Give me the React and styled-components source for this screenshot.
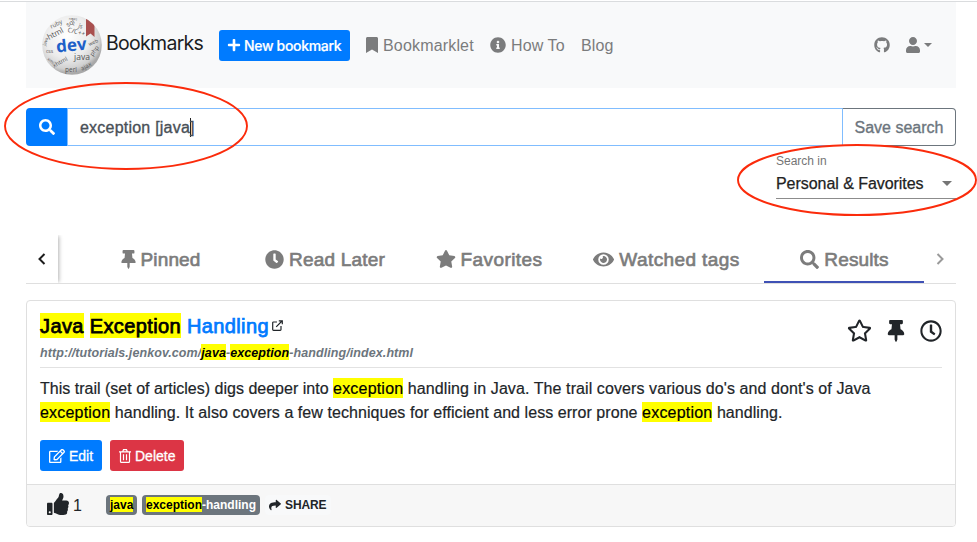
import React from "react";
import styled, { createGlobalStyle } from "styled-components";
import {
  FaPlus, FaBookmark, FaInfoCircle, FaGithub, FaUser, FaSearch, FaThumbtack, FaClock,
  FaStar, FaEye, FaRegStar, FaRegClock, FaRegEdit, FaThumbsUp, FaShare,
} from "react-icons/fa";

const GlobalStyle = createGlobalStyle`
  * { box-sizing: border-box; }
  body { margin: 0; background: #fff; color: #212529; overflow: hidden;
    font: 16px/24px "Liberation Sans", Arial, sans-serif; }
  button { font-family: inherit; cursor: pointer; }
  svg { display: block; flex: none; }
`;

const Page = styled.div`
  position: relative;
  width: 977px;
  height: 542px;
  padding: 1px 21px 0 26px;
  &::before { content: ""; display: block; height: 1px; margin: 0 -21px 0 -26px; background: #dadcde; }
`;
const Text = styled.span`
  white-space: nowrap;
  letter-spacing: ${(p) => p.$ls || 0}px;
  -webkit-text-stroke: ${(p) => p.$stroke || 0}px currentColor;
`;
const Glyph = styled.span`
  display: flex;
  justify-content: center;
  width: ${(p) => p.$w}px;
`;
const Header = styled.header`
  display: flex;
  align-items: center;
  height: 86px;
  padding: 0 24px 0 16px;
  background: #f8f9fa;
`;
const Brand = styled.a`
  display: flex;
  width: 177px;
  gap: 4px;
  font: 19.5px/30px Inter, sans-serif;
  color: #1b1d1f;
  align-items: center;
  & > span { margin-top: -5px; }
`;
const NewButton = styled.button`
  display: flex;
  align-items: center;
  gap: 3px;
  width: 131px;
  height: 31px;
  padding: 0 8px;
  border: 0;
  border-radius: 3px;
  background: #007bff;
  color: #fff;
  font: 500 14px/21px Inter, sans-serif;
`;
const Nav = styled.nav`
  display: flex;
  flex: 1;
  margin-left: 16px;
`;
const NavLink = styled.a`
  display: flex;
  align-items: center;
  gap: ${(p) => p.$gap || 0}px;
  width: ${(p) => p.$w}px;
  color: #7b7c7d;
  & > ${Text} { padding-top: 2px; }
`;
const Caret = styled.i`
  border: solid transparent;
  border-width: ${(p) => p.$s}px ${(p) => p.$s}px 0;
  border-top-color: currentColor;
`;
const SearchRow = styled.div`
  display: flex;
  width: 930px;
  height: 38px;
  margin-top: 20px;
`;
const SearchButton = styled.button`
  display: grid;
  place-items: center;
  width: 41px;
  border: 0;
  border-radius: 4px 0 0 4px;
  background: #007bff;
  color: #fff;
`;
const SearchField = styled.div`
  display: flex;
  align-items: center;
  flex: 1;
  padding: 1px 0 0 12px;
  border: 1px solid #80bdff;
  color: #495057;
`;
const Cursor = styled.i`
  width: 1px;
  height: 19px;
  margin-right: -1px;
  background: #222;
`;
const SaveButton = styled.button`
  width: 114px;
  margin-left: -1px;
  border: 1px solid #6c757d;
  border-left-color: #80bdff;
  border-radius: 0 4px 4px 0;
  background: #fff;
  color: #6c757d;
  font-size: 16px;
  padding: 2px 0 0;
`;
const Scope = styled.div`
  width: 180px;
  height: 53px;
  margin-left: 750px;
  padding-top: 7px;
  border-bottom: 1px solid #8c8c8c;
  color: #222;
`;
const ScopeLabel = styled.div`
  font-size: 12px;
  line-height: 16px;
  color: #757575;
`;
const ScopeValue = styled.div`
  display: flex;
  align-items: center;
  justify-content: space-between;
  height: 28px;
  padding-right: 4px;
  & > i { color: #757575; }
  & > ${Text} { padding-top: 2px; }
`;
const Tabs = styled.div`
  display: flex;
  width: 930px;
  height: 49px;
  margin-top: 36px;
  border-bottom: 1px solid #dfdfdf;
`;
const Pager = styled.button`
  display: grid;
  place-items: center;
  width: 32px;
  height: 48px;
  padding: 0;
  border: 0;
  background: #fff;
  color: ${(p) => (p.$muted ? "#9a9a9a" : "#1c1c1c")};
  box-shadow: ${(p) => (p.$muted ? "none" : "2px 0 4px -1px rgba(0,0,0,.3)")};
  clip-path: inset(0 -8px 0 0);
`;
const TabTrack = styled.div`
  display: flex;
  flex: 1;
  padding-left: 23px;
`;
const Tab = styled.a`
  display: flex;
  align-items: center;
  justify-content: center;
  gap: ${(p) => p.$gap}px;
  width: ${(p) => p.$w}px;
  height: 48px;
  padding-top: 2px;
  border-bottom: 2px solid ${(p) => (p.$active ? "#3f51b5" : "transparent")};
  color: #7c7c7c;
  font-size: 19px;
  & > ${Text} { padding-top: 1px; }
`;
const Card = styled.article`
  width: 930px;
  height: 227px;
  margin-top: 16px;
  border: 1px solid #dfdfdf;
  border-radius: 4px;
  overflow: hidden;
`;
const CardBody = styled.div`
  height: 183px;
  padding: 12px 13px 0;
`;
const CardHead = styled.div`
  display: flex;
  justify-content: space-between;
  height: 55px;
  border-bottom: 1px solid #e2e2e2;
`;
const Title = styled.h5`
  display: flex;
  align-items: center;
  gap: 3px;
  margin: 0;
  font-size: 20px;
  font-weight: 400;
  line-height: 25px;
  color: #007bff;
  & > svg { margin-top: -2px; color: #212529; }
`;
const Mark = styled.mark`
  display: inline-block;
  height: ${(p) => p.$h}px;
  line-height: ${(p) => p.$h + 2}px;
  background: #ff0;
  color: #000;
`;
const Url = styled.div`
  margin-top: 5px;
  font: italic bold 12.5px/17px "Liberation Sans", Arial, sans-serif;
  color: #6c757d;
`;
const Actions = styled.div`
  display: flex;
  align-items: center;
  gap: 16px;
  height: 35px;
`;
const Description = styled.p`
  margin: 9px 0 15px;
  & ${Mark} { letter-spacing: 0.2px; }
`;
const Buttons = styled.div`
  display: flex;
  gap: 8px;
`;
const SmallButton = styled.button`
  display: flex;
  align-items: center;
  gap: 4px;
  width: ${(p) => p.$w}px;
  height: 31px;
  padding: 0 0 0 9px;
  border: 0;
  border-radius: 3px;
  background: ${(p) => p.$bg};
  color: #fff;
  font-size: 14px;
`;
const CardFooter = styled.footer`
  display: flex;
  align-items: center;
  height: 42px;
  padding: 0 0 2px 20px;
  border-top: 1px solid #dfdfdf;
  background: #f7f7f7;
`;
const Likes = styled.div`
  display: flex;
  align-items: center;
  gap: 4px;
  width: 59px;
  & > svg { margin-top: -1px; }
  & > ${Text} { padding-top: 3px; }
`;
const Tag = styled.span`
  display: flex;
  align-items: center;
  width: ${(p) => p.$w}px;
  height: 20px;
  padding: 0 4px;
  margin-right: 5px;
  border-radius: 4px;
  background: #6c757d;
  color: #fff;
  font: bold 12px/16px "Liberation Sans", Arial, sans-serif;
`;
const Share = styled.a`
  display: flex;
  align-items: center;
  gap: 4px;
  height: 20px;
  padding: 0 4px;
  border-radius: 4px;
  background: #f8f9fa;
  font: bold 12px/16px "Liberation Sans", Arial, sans-serif;
`;
const Annotations = styled.svg`
  position: absolute;
  inset: 0;
  pointer-events: none;
`;

const words = [
  ["ruby", 15, 11, -25, 6], ["sql", 29.5, 10, -30, 6.5], ["js", 38, 13, 20, 6], ["html", 14.5, 21, -28, 8],
  ["C/C++", 34, 19, 15, 6.5], ["web", 52, 29, -25, 5], ["php", 54, 37, -55, 6], ["css", 7.5, 38, 0, 5],
  ["java", 40, 45, 0, 8.5], ["xhtml", 19, 49, -28, 6], ["perl", 29, 57, 0, 6.5], ["ajax", 45, 53, -28, 6],
  ["xml", 8, 47, 40, 4.5], ["java", 5, 27, -70, 4.5], ["news", 31, 5, 5, 3.5],
];
const Logo = () => (
  <svg width="60" height="60" viewBox="0 0 60 60">
    <defs>
      <radialGradient id="ball" cx="42%" cy="35%" r="62%">
        <stop offset="0" stopColor="#fff" />
        <stop offset=".6" stopColor="#ececec" />
        <stop offset=".88" stopColor="#d0d0d0" />
        <stop offset="1" stopColor="#a9a9a9" />
      </radialGradient>
      <clipPath id="disc"><circle cx="30" cy="30" r="29.8" /></clipPath>
    </defs>
    <g clipPath="url(#disc)" fontFamily="Open Sans, sans-serif" textAnchor="middle">
      <rect width="60" height="60" fill="url(#ball)" />
      {words.map(([w, x, y, r, s], i) => (
        <text key={i} x={x} y={y} fontSize={s} fill="#555" transform={`rotate(${r} ${x} ${y})`}>{w}</text>
      ))}
      <path d="M44 3q4.500 2 8.500 6v13l-4-3.500-4.500 3z" fill="#a9504f" />
      <text x="30" y="36" fontSize="17" fontWeight="700" fill="#2060c8" transform="rotate(-6 30 36)">dev</text>
    </g>
  </svg>
);

const ExternalIcon = () => (
  <svg width="11" height="11" viewBox="0 0 11 11" fill="none" stroke="currentColor" strokeWidth="1.200">
    <path d="M5 2H1.500Q.7 2 .7 2.800v6.700q0 .8.8.8h6.700q.8 0 .8-.8V6M6.800.8h3.500v3.500M10 1 4.200 6.800" />
  </svg>
);
const TrashIcon = () => (
  <svg width="12" height="14" viewBox="0 0 12 14" fill="none" stroke="currentColor" strokeWidth="1.200">
    <path d="M0 2.900h12M3.700 2.800 4.500.7h3l.8 2.100M1.500 3v9.400q0 1 1 1h7q1 0 1-1V3M4.500 5.200v6M7.500 5.200v6" />
  </svg>
);
const Chevron = ({ right }) => (
  <svg width="8" height="12" viewBox="0 0 8 12" fill="none" stroke="currentColor" strokeWidth="2">
    <path d={right ? "M1.500 1 6.500 6l-5 5" : "M6.500 1 1.500 6l5 5"} />
  </svg>
);

const tabs = [
  { label: "Pinned", Icon: FaThumbtack, w: 160, gap: 5, iw: 14, size: 19, ls: 0.15 },
  { label: "Read Later", Icon: FaClock, w: 168, gap: 5, iw: 19, size: 19, ls: 0.2 },
  { label: "Favorites", Icon: FaStar, w: 160, gap: 5, iw: 20, size: 20, ls: 0.42 },
  { label: "Watched tags", Icon: FaEye, w: 195, gap: 5, iw: 21, size: 21, ls: 0.4 },
  { label: "Results", Icon: FaSearch, w: 160, gap: 5, iw: 20, size: 19, ls: 0.15, active: true },
];

export default function App() {
  return (
    <>
      <GlobalStyle />
      <Page>
        <Header>
          <Brand><Logo /><Text $ls={-0.7}>Bookmarks</Text></Brand>
          <NewButton><FaPlus size={14} /><Text $ls={-0.33} $stroke={0.2}>New bookmark</Text></NewButton>
          <Nav>
            <NavLink $w={124} $gap={5}><Glyph $w={12}><FaBookmark size={16} /></Glyph><Text $ls={0.17}>Bookmarklet</Text></NavLink>
            <NavLink $w={91} $gap={5}><FaInfoCircle size={16} /><Text $ls={0.1}>How To</Text></NavLink>
            <NavLink $w={40}><Text $ls={0.1}>Blog</Text></NavLink>
          </Nav>
          <NavLink $w={31}><FaGithub size={16} /></NavLink>
          <NavLink $w={27} $gap={3}><FaUser size={16} /><Caret $s={4} /></NavLink>
        </Header>
        <SearchRow>
          <SearchButton><FaSearch size={16} /></SearchButton>
          <SearchField><Text $stroke={0.35} $ls={0.22}>exception [java</Text><Cursor /><Text $stroke={0.35}>]</Text></SearchField>
          <SaveButton><Text $stroke={0.35}>Save search</Text></SaveButton>
        </SearchRow>
        <Scope>
          <ScopeLabel><Text>Search in</Text></ScopeLabel>
          <ScopeValue><Text $stroke={0.25} $ls={-0.05}>Personal &amp; Favorites</Text><Caret $s={5} /></ScopeValue>
        </Scope>
        <Tabs>
          <Pager><Chevron /></Pager>
          <TabTrack>
            {tabs.map(({ label, Icon, w, gap, iw, size, ls, active }) => (
              <Tab key={label} $w={w} $gap={gap} $active={active}>
                <Glyph $w={iw}><Icon size={size} /></Glyph><Text $stroke={0.65} $ls={ls}>{label}</Text>
              </Tab>
            ))}
          </TabTrack>
          <Pager $muted><Chevron right /></Pager>
        </Tabs>
        <Card>
          <CardBody>
            <CardHead>
              <div>
                <Title>
                  <Text $stroke={0.75} $ls={0.38}><Mark $h={25}>Java</Mark> <Mark $h={25}>Exception</Mark> Handling</Text>
                  <ExternalIcon />
                </Title>
                <Url>
                  <Text $ls={0.08}>http://tutorials.jenkov.com/<Mark $h={16}>java</Mark>-<Mark $h={16}>exception</Mark>-handling/index.html</Text>
                </Url>
              </div>
              <Actions>
                <Glyph $w={24}><FaRegStar size={25} /></Glyph>
                <Glyph $w={17}><FaThumbtack size={22} /></Glyph>
                <FaRegClock size={22} />
              </Actions>
            </CardHead>
            <Description>
              <Text $stroke={0.2} $ls={0.01}>This trail (set of articles) digs deeper into </Text>
              <Text $stroke={0.2} $ls={0.09}><Mark $h={20}>exception</Mark> handling in Java. The trail covers various do's and dont's of Java</Text>
              <br />
              <Text $stroke={0.2} $ls={0.06}><Mark $h={20}>exception</Mark> handling. It also covers a few techniques for efficient and less error prone <Mark $h={20}>exception</Mark> handling.</Text>
            </Description>
            <Buttons>
              <SmallButton $w={62} $bg="#007bff"><Glyph $w={16}><FaRegEdit size={16} /></Glyph><Text $stroke={0.3}>Edit</Text></SmallButton>
              <SmallButton $w={74} $bg="#dc3545"><TrashIcon /><Text $stroke={0.3}>Delete</Text></SmallButton>
            </Buttons>
          </CardBody>
          <CardFooter>
            <Likes><FaThumbsUp size={22} /><Text>1</Text></Likes>
            <Tag $w={31}><Text><Mark $h={15}>java</Mark></Text></Tag>
            <Tag $w={118}><Text><Mark $h={15}>exception</Mark>-handling</Text></Tag>
            <Share><FaShare size={12} /><Text $ls={-0.1}>SHARE</Text></Share>
          </CardFooter>
        </Card>
        <Annotations width="977" height="542" fill="none" stroke="#fb2b0b" strokeWidth="1.900">
          <ellipse cx="126" cy="126" rx="121" ry="43" />
          <ellipse cx="857" cy="180" rx="119" ry="35" />
        </Annotations>
      </Page>
    </>
  );
}
